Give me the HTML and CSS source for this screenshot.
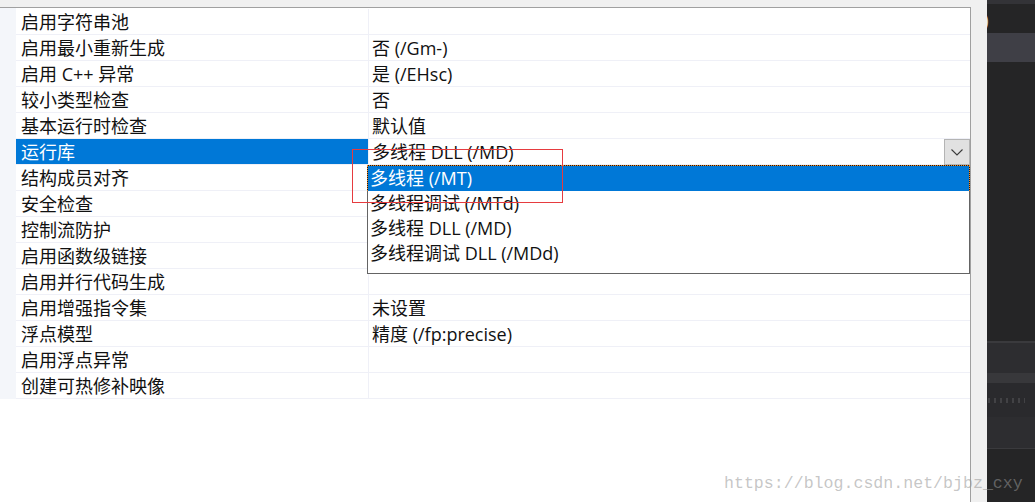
FILE: index.html
```html
<!DOCTYPE html>
<html>
<head>
<meta charset="utf-8">
<link rel="stylesheet" href="styles.css">
</head>
<body>
<div class="screen">
  <div class="main">
    <div class="grid">
      <div class="gutter"></div>
      <div class="rows">
        <div class="row"><div class="label">启用字符串池</div><div class="value"></div></div>
        <div class="row"><div class="label">启用最小重新生成</div><div class="value">否 (/Gm-)</div></div>
        <div class="row"><div class="label">启用 C++ 异常</div><div class="value">是 (/EHsc)</div></div>
        <div class="row"><div class="label">较小类型检查</div><div class="value">否</div></div>
        <div class="row"><div class="label">基本运行时检查</div><div class="value">默认值</div></div>
        <div class="row"><div class="label sel">运行库</div><div class="value combo"><span class="combo-text">多线程 DLL (/MD)</span><span class="combo-btn"><svg width="12" height="7" viewBox="0 0 12 7"><path d="M0.5 0.5 L6 6 L11.5 0.5" fill="none" stroke="#3a3a3a" stroke-width="1.1"/></svg></span></div></div>
        <div class="row"><div class="label">结构成员对齐</div><div class="value"></div></div>
        <div class="row"><div class="label">安全检查</div><div class="value"></div></div>
        <div class="row"><div class="label">控制流防护</div><div class="value"></div></div>
        <div class="row"><div class="label">启用函数级链接</div><div class="value"></div></div>
        <div class="row"><div class="label">启用并行代码生成</div><div class="value"></div></div>
        <div class="row"><div class="label">启用增强指令集</div><div class="value">未设置</div></div>
        <div class="row"><div class="label">浮点模型</div><div class="value">精度 (/fp:precise)</div></div>
        <div class="row"><div class="label">启用浮点异常</div><div class="value"></div></div>
        <div class="row"><div class="label">创建可热修补映像</div><div class="value"></div></div>
      </div>
    </div>
  </div>
  <div class="dark">
    <div class="d-top"></div>
    <div class="d-paren"><span>)</span></div>
    <div class="d-tab"></div>
    <div class="d-body"></div>
    <div class="d-line"></div>
    <div class="d-bar1"></div>
    <div class="d-bar2"></div>
    <div class="d-bar3"><div class="dots"></div></div>
    <div class="d-bar4"></div>
    <div class="d-line2"></div>
    <div class="d-rest"></div>
  </div>

  <div class="dropdown">
    <div class="item active">多线程 (/MT)</div>
    <div class="item">多线程调试 (/MTd)</div>
    <div class="item">多线程 DLL (/MD)</div>
    <div class="item">多线程调试 DLL (/MDd)</div>
  </div>
  <div class="mark"></div>
  <div class="watermark">https://blog.csdn.net/bjbz_cxy</div>
</div>
</body>
</html>
```

FILE: styles.css
```css
html, body {
  margin: 0;
  padding: 0;
}
body {
  width: 1035px;
  height: 502px;
  overflow: hidden;
  font-family: "Open Sans", "Noto Sans CJK SC", sans-serif;
  font-size: 18px;
  color: #111;
}
.screen {
  position: relative;
  display: flex;
  width: 1035px;
  height: 502px;
}
.main {
  width: 987px;
  height: 502px;
  background: #f0f0f0;
  padding-top: 7px;
  box-sizing: border-box;
}
.grid {
  width: 971px;
  height: 495px;
  box-sizing: border-box;
  border-top: 1px solid #a0a0a0;
  border-right: 1px solid #a0a0a0;
  background: #fff;
  display: flex;
  align-items: flex-start;
}
.gutter {
  width: 16px;
  height: 391px;
  background: #f4f6fa;
  flex: none;
}
.rows {
  flex: 1;
  padding-top: 1px;
}
.row {
  display: flex;
  height: 26px;
}
.label, .value {
  box-sizing: border-box;
  height: 26px;
  border-bottom: 1px solid #eff0f7;
  line-height: 25px;
  padding-top: 1px;
  white-space: nowrap;
}
.label {
  width: 353px;
  flex: none;
  border-right: 1px solid #eff0f7;
  padding-left: 5px;
}
.label.sel {
  background: #0078d7;
  color: #fff;
}
.value {
  flex: 1;
  padding-left: 3px;
}
.combo {
  display: flex;
  align-items: flex-start;
  padding-top: 0;
}
.combo-text {
  flex: 1;
  padding-top: 1px;
}
.combo-btn {
  width: 26px;
  height: 26px;
  box-sizing: border-box;
  border: 1px solid #b4b4b4;
  background: #e1e1e1;
  display: flex;
  align-items: center;
  justify-content: center;
  padding-top: 1px;
}
.combo-btn svg {
  display: block;
}

.dark {
  width: 48px;
  height: 502px;
  display: flex;
  flex-direction: column;
  background: #252526;
  overflow: hidden;
}
.d-top { height: 4px; background: #333337; }
.d-paren {
  height: 29px;
  background: #252526;
  color: #d8d8d8;
  font-family: "Noto Sans", sans-serif;
  font-size: 19px;
  line-height: 26px;
  overflow: hidden;
}
.d-paren span {
  display: block;
  margin-left: -4px;
  padding-top: 3px;
}
.d-tab { height: 29px; background: #3f3f46; }
.d-body { height: 279px; background: #252526; }
.d-line { height: 2px; background: #3a3a3d; }
.d-bar1 { height: 30px; background: #2d2d30; }
.d-bar2 { height: 10px; background: #38383b; }
.d-bar3 {
  height: 34px;
  background: #2a2a2d;
  padding-top: 15px;
  box-sizing: border-box;
}
.dots {
  width: 37px;
  height: 5px;
  margin-left: 1px;
  background-image: repeating-linear-gradient(90deg, #48484b 0 2px, transparent 2px 6px);
  opacity: 0.8;
}
.d-bar4 { height: 31px; background: #2d2d30; }
.d-line2 { height: 1px; background: #3a3a3d; }
.d-rest { flex: 1; background: #252526; }

.dropdown {
  position: absolute;
  left: 367px;
  top: 165px;
  width: 603px;
  height: 109px;
  box-sizing: border-box;
  border: 1px solid #646464;
  border-top: none;
  background: #fff;
}
.item {
  height: 25px;
  line-height: 25px;
  padding-left: 2px;
  white-space: nowrap;
  color: #111;
}
.item.active {
  height: 26px;
  margin-left: -1px;
  margin-right: -1px;
  padding-left: 2px;
  box-sizing: border-box;
  border: 1px dotted #f08a24;
  border-bottom: none;
  background: linear-gradient(#0078d7, #0078d7) padding-box, #1a1a1a border-box;
  color: #fff;
}
.mark {
  position: absolute;
  left: 352px;
  top: 149px;
  width: 211px;
  height: 54px;
  box-sizing: border-box;
  border: 1px solid #e63b3f;
}
.watermark {
  position: absolute;
  left: 724px;
  top: 474px;
  font-family: "Liberation Mono", monospace;
  font-size: 16.6px;
  line-height: 20px;
  color: rgba(150, 150, 150, 0.55);
  white-space: nowrap;
}
```
